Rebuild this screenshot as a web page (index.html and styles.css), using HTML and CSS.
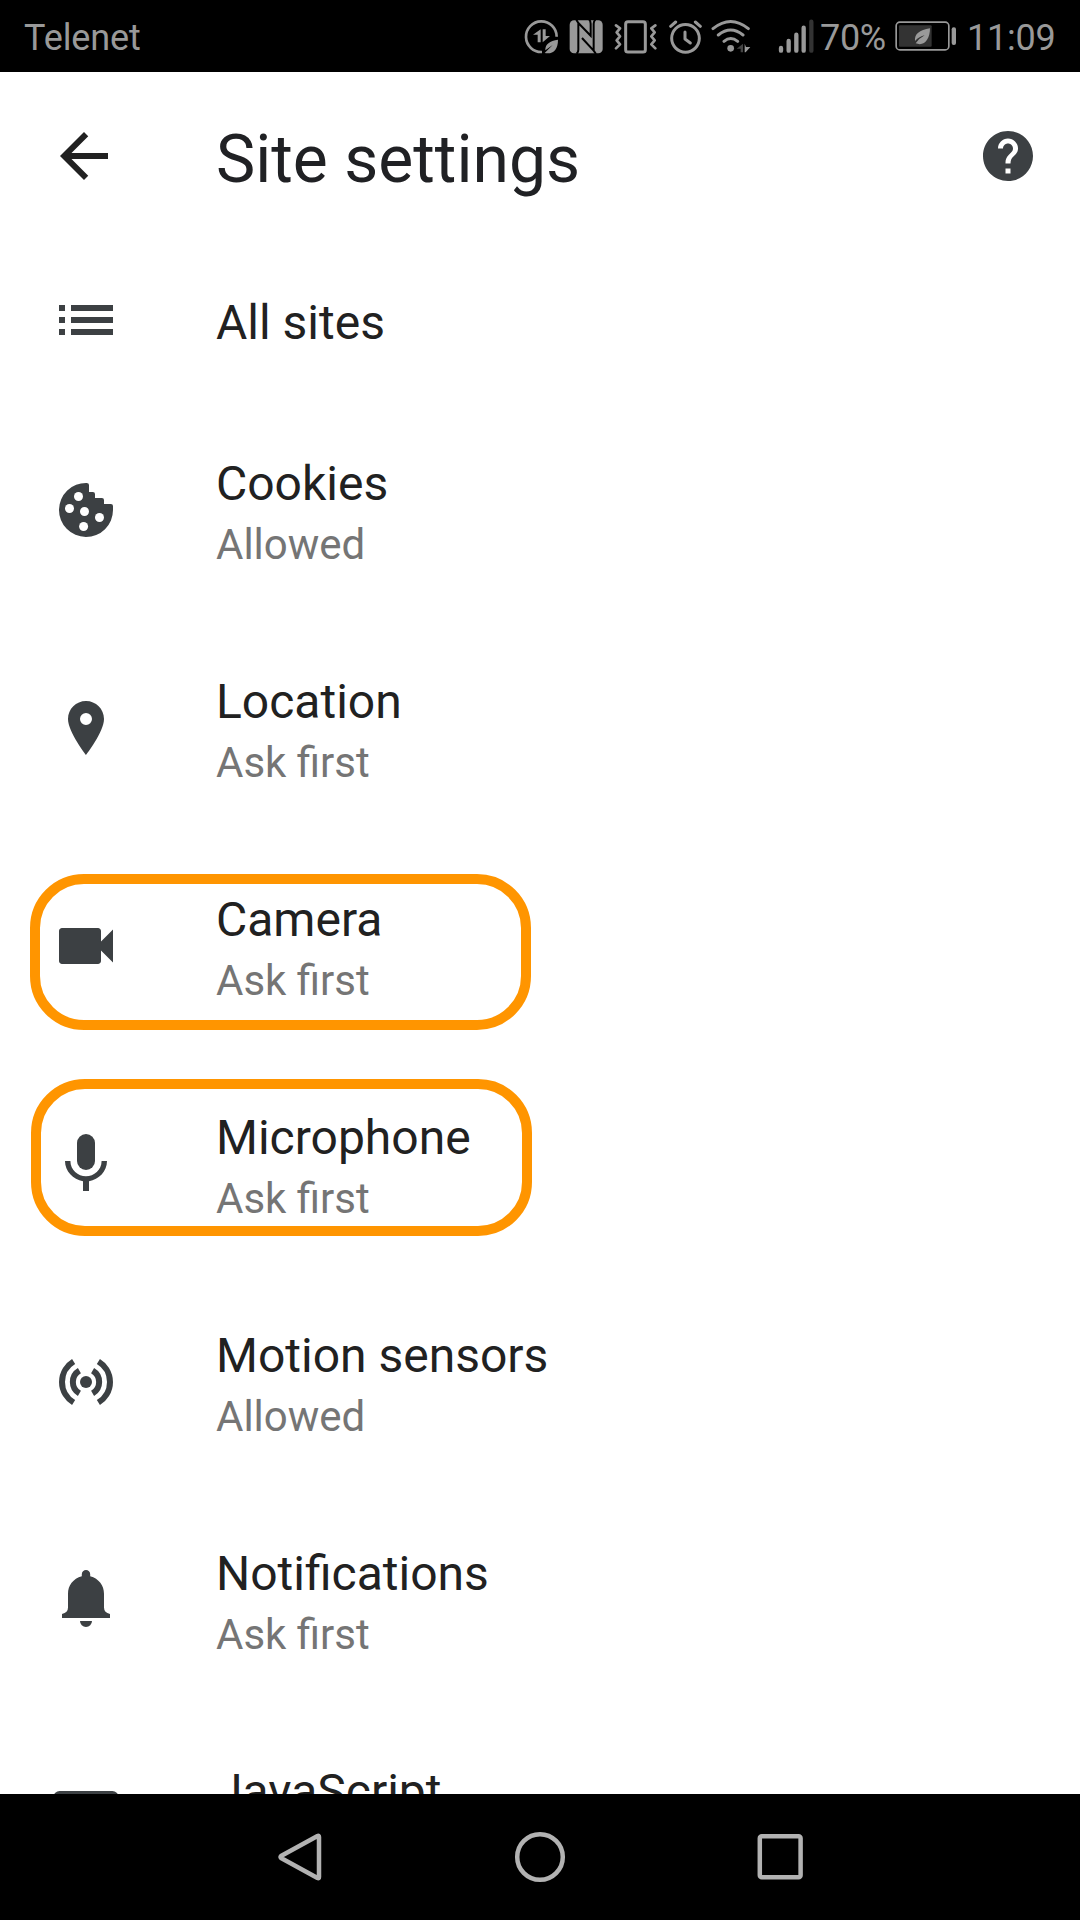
FILE: index.html
```
<!DOCTYPE html>
<html lang="en">
    <head>
        <meta charset="UTF-8">
        <title>Site settings</title>
        <link rel="stylesheet" href="styles.css">
    </head>
    <body>
        <div class="statusbar">
            <span class="operator">Telenet</span>
            <div class="status-icons">
                <!-- data saver -->
                <svg width="35" height="35" viewBox="42 56 105 105">
                    <path d="M140 109A46 46 0 1 0 96 155" fill="none" stroke="#999" stroke-width="8"/>
                    <path d="M92 87v39h-9v-23H69zM98 87v39l22-19h-13v-20z" fill="#999"/>
                    <path d="M144 118C118 121 105 133 106 150L128 134L104 158C128 163 144 150 144 118z" fill="#999"/>
                </svg>
                <!-- nfc -->
                <svg class="nfc" width="34" height="35" viewBox="178 56 102 105">
                    <rect x="180" y="60" width="99" height="99" rx="13" fill="#999"/>
                    <path d="M200 58L206 68V148Q206 155 201 160M206 68L243 106V70Q243 62 238 56M259 161L252 151V70Q252 63 257 58M252 151L217 113" fill="none" stroke="#000" stroke-width="6"/>
                </svg>
                <!-- vibrate -->
                <svg class="vibrate" width="43" height="35" viewBox="313 56 129 105" fill="none" stroke="#999">
                    <rect x="348" y="64" width="59" height="91" rx="7" stroke-width="9"/>
                    <path d="M319 75l12 9-10 12 10 12-10 12 10 12-12 12M437 75l-12 9 10 12-10 12 10 12-10 12 12 12" stroke-width="8" stroke-linecap="round" stroke-linejoin="round"/>
                </svg>
                <!-- alarm -->
                <svg class="alarm" width="33" height="35" viewBox="477 56 99 105" fill="none" stroke="#999" stroke-linecap="round">
                    <circle cx="526.500" cy="114" r="41.500" stroke-width="9"/>
                    <path d="M482 78l15-13M571 78l-15-13" stroke-width="9"/>
                    <path d="M525 95v21l16 12" stroke-width="9" stroke-linejoin="round"/>
                </svg>
                <!-- wifi -->
                <svg class="wifi" width="40" height="35" viewBox="604 56 120 105" fill="none" stroke="#999" stroke-width="9" stroke-linecap="round">
                    <path d="M610 85Q663 42 716 85M626 104Q663 74 700 104M643 123Q663 106 684 123"/>
                    <circle cx="663" cy="144" r="10" fill="#999" stroke="none"/>
                    <path d="M700 130v26h-7v-11h-12z" fill="#444" stroke="none"/>
                    <path d="M705 130l4 10h13l-14 16h-3z" fill="#999" stroke="none"/>
                </svg>
                <!-- signal -->
                <svg class="signal" width="36" height="35" viewBox="25 55 108 105" fill="none" stroke="#999" stroke-width="13" stroke-linecap="round">
                    <path d="M34 142v8M57 121v29M80 102v48M102 81v69"/>
                    <path d="M125 63v87" stroke="#333"/>
                </svg>
            </div>
            <span class="percent">70%</span>
            <!-- battery -->
            <svg class="battery" width="62" height="31" viewBox="376 64 186 93">
                <rect x="379.500" y="67.500" width="158" height="83" rx="11" fill="none" stroke="#999" stroke-width="5"/>
                <rect x="388" y="77" width="98" height="64" rx="3" fill="#333"/>
                <rect x="546" y="83" width="13" height="53" rx="6" fill="#999"/>
                <path d="M481 86C449 92 434 103 436 124Q449 110 465 107Q448 116 438 131C464 141 481 119 481 86z" fill="#999"/>
            </svg>
            <span class="clock">11:09</span>
        </div>

        <header class="toolbar">
            <svg class="icon back" viewBox="0 0 24 24"><path d="M20 11H7.830l5.590-5.590L12 4l-8 8 8 8 1.410-1.410L7.830 13H20v-2z"/></svg>
            <h1>Site settings</h1>
            <svg class="icon help" viewBox="0 0 24 24"><path d="M12 2C6.480 2 2 6.480 2 12s4.480 10 10 10 10-4.480 10-10S17.520 2 12 2zm1 17h-2v-2h2v2zm2.070-7.750l-.9.920C13.450 12.900 13 13.500 13 15h-2v-.5c0-1.100.45-2.100 1.170-2.830l1.240-1.260c.37-.36.59-.86.59-1.410 0-1.100-.9-2-2-2s-2 .9-2 2H8c0-2.210 1.790-4 4-4s4 1.790 4 4c0 .88-.36 1.680-.93 2.250z"/></svg>
        </header>

        <main class="settings">
            <div class="row single">
                <svg class="icon" viewBox="0 0 24 24"><path d="M3 13h2v-2H3v2zm0 4h2v-2H3v2zm0-8h2V7H3v2zm4 4h14v-2H7v2zm0 4h14v-2H7v2zM7 7v2h14V7H7z"/></svg>
                <div class="label">
                    <p class="name">All sites</p>
                </div>
            </div>
            <div class="row">
                <svg class="icon" viewBox="0 0 24 24">
                    <path d="M13 3.700Q13 3 12.200 3A9 9 0 1 0 21 12V10.700Q21 10 20.300 10H18V8.700Q18 8 17.300 8H15V6.700Q15 6 14.300 6H13z"/>
                    <g fill="#fff">
                        <circle cx="9.500" cy="7.500" r="1.500"/>
                        <circle cx="6.500" cy="11.500" r="1.500"/>
                        <circle cx="11.500" cy="12.500" r="1.500"/>
                        <circle cx="16.500" cy="14.500" r="1.500"/>
                        <circle cx="11.200" cy="17.500" r="1.500"/>
                    </g>
                </svg>
                <div class="label">
                    <p class="name">Cookies</p>
                    <p class="state">Allowed</p>
                </div>
            </div>
            <div class="row">
                <svg class="icon" viewBox="0 0 24 24"><path d="M12 3C8.700 3 6 5.600 6 9c0 4.300 6 12 6 12s6-7.700 6-12c0-3.400-2.700-6-6-6zm0 8a2 2 0 1 1 0-4 2 2 0 0 1 0 4z"/></svg>
                <div class="label">
                    <p class="name">Location</p>
                    <p class="state">Ask first</p>
                </div>
            </div>
            <div class="row">
                <div class="highlight camera"></div>
                <svg class="icon" viewBox="0 0 24 24"><path d="M17 10.500V7c0-.55-.45-1-1-1H4c-.55 0-1 .45-1 1v10c0 .55.45 1 1 1h12c.55 0 1-.45 1-1v-3.500l4 4v-11l-4 4z"/></svg>
                <div class="label">
                    <p class="name">Camera</p>
                    <p class="state">Ask first</p>
                </div>
            </div>
            <div class="row">
                <div class="highlight mic"></div>
                <svg class="icon" viewBox="0 0 24 24">
                    <rect x="9" y="2" width="6" height="12" rx="3"/>
                    <path d="M17.200 11c0 3-2.540 5.100-5.200 5.100S6.800 14 6.800 11H5c0 3.410 2.720 6.230 6 6.720V21h2v-3.280c3.280-.48 6-3.300 6-6.720h-1.800z"/>
                </svg>
                <div class="label">
                    <p class="name">Microphone</p>
                    <p class="state">Ask first</p>
                </div>
            </div>
            <div class="row">
                <svg class="icon" viewBox="0 0 24 24">
                    <circle cx="12" cy="12" r="2"/>
                    <path d="M9.800 8.200A4.400 4.400 0 0 0 9.800 15.800M14.200 8.200A4.400 4.400 0 0 1 14.200 15.800M7.870 5.150A8 8 0 0 0 7.870 18.850M16.130 5.150A8 8 0 0 1 16.130 18.850" class="wave"/>
                </svg>
                <div class="label">
                    <p class="name">Motion sensors</p>
                    <p class="state">Allowed</p>
                </div>
            </div>
            <div class="row">
                <svg class="icon" viewBox="0 0 24 24"><path d="M10 19a2 2 0 0 0 4 0zM20 18v-1.300q-2-.5-2-2.200V9.900c0-2.700-1.700-5-4.600-5.800V3.400a1.400 1.400 0 0 0-2.800 0v.7C7.700 4.900 6 7.200 6 9.900v4.600q0 1.700-2 2.200V18z"/></svg>
                <div class="label">
                    <p class="name">Notifications</p>
                    <p class="state">Ask first</p>
                </div>
            </div>
            <div class="row">
                <svg class="icon" viewBox="0 0 24 24"><rect x="1.200" y="3" width="21.600" height="18" rx="2"/></svg>
                <div class="label">
                    <p class="name">JavaScript</p>
                </div>
            </div>
        </main>

        <nav class="navbar">
            <svg width="60" height="60" viewBox="0 0 60 60"><path d="M47.500 9Q49 8 49 10V50Q49 52 47.500 51L11 31Q10 30 11 29z"/></svg>
            <svg width="60" height="60" viewBox="0 0 60 60"><circle cx="30" cy="30" r="22.800"/></svg>
            <svg width="60" height="60" viewBox="0 0 60 60"><rect x="9.800" y="9.300" width="40.800" height="41" rx="2"/></svg>
        </nav>
    </body>
</html>
```
FILE: styles.css
```
body{
    margin: 0;
    width: 1080px;
    height: 1920px;
    overflow: hidden;
    display: flex;
    flex-direction: column;
    background: #fff;
    font-family: Roboto, sans-serif;
}
svg{
    display: block;
    flex: none;
}
p, h1{
    margin: 0;
    font-weight: 400;
}

/* status bar */
.statusbar{
    flex: none;
    height: 72px;
    display: flex;
    align-items: center;
    background: #000;
    color: #999;
    font-size: 36px;
    line-height: 42px;
}
.statusbar span{
    padding-top: 4px;
}
.operator{
    width: 500px;
    padding-left: 24px;
    letter-spacing: -0.1px;
}
.status-icons{
    display: flex;
}
.nfc{
    margin-left: 10px;
}
.vibrate{
    margin-left: 11px;
}
.alarm{
    margin-left: 12px;
}
.wifi{
    margin-left: 9px;
}
.signal{
    margin-left: 27px;
}
.percent{
    width: 75px;
    margin-left: 6px;
    letter-spacing: -0.3px;
}
.clock{
    margin-left: 10px;
    letter-spacing: -0.2px;
}

/* toolbar */
.toolbar{
    flex: none;
    height: 168px;
    display: flex;
    align-items: center;
    padding: 0 42px 0 48px;
}
.toolbar h1{
    flex: 1;
    margin: 8px 0 0 96px;
    font-size: 66px;
    line-height: 78px;
    color: #202124;
}
.icon{
    width: 72px;
    height: 72px;
    fill: #3c4043;
}
.back{
    fill: #212121;
}
.help{
    width: 60px;
    height: 60px;
}

/* list */
.settings{
    flex: none;
    height: 1554px;
    overflow: hidden;
}
.row{
    position: relative;
    height: 218px;
    display: flex;
    align-items: center;
    padding-left: 50px;
}
.label{
    height: 120px;
    margin: 4px 0 0 94px;
}
.single{
    height: 161px;
}
.single .icon{
    margin-bottom: 1px;
}
.single .label{
    height: 64px;
}
.name{
    font-size: 48px;
    line-height: 64px;
    color: #212121;
}
.state{
    font-size: 42px;
    line-height: 58px;
    color: #757575;
}
.wave{
    fill: none;
    stroke: #3c4043;
    stroke-width: 2;
}
.highlight{
    position: absolute;
    box-sizing: border-box;
    left: 30px;
    width: 501px;
    height: 156px;
    border: 10px solid #ff9500;
    border-radius: 54px;
}
.camera{
    top: 37px;
}
.mic{
    top: 24px;
    left: 31px;
    height: 157px;
}

/* navigation bar */
.navbar{
    flex: none;
    height: 126px;
    display: flex;
    justify-content: center;
    align-items: center;
    gap: 180px;
    background: #000;
}
.navbar svg{
    fill: none;
    stroke: #b2b2b2;
    stroke-width: 4.5;
    stroke-linejoin: round;
}
```
